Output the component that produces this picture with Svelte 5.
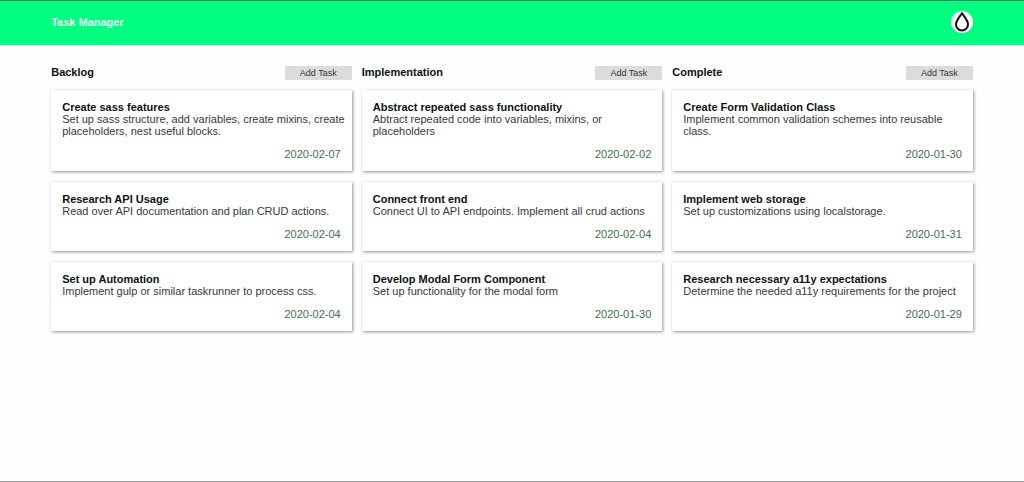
<script>
  const columns = [
    {
      name: 'Backlog',
      tasks: [
        { title: 'Create sass features', text: 'Set up sass structure, add variables, create mixins, create placeholders, nest useful blocks.', date: '2020-02-07' },
        { title: 'Research API Usage', text: 'Read over API documentation and plan CRUD actions.', date: '2020-02-04' },
        { title: 'Set up Automation', text: 'Implement gulp or similar taskrunner to process css.', date: '2020-02-04' }
      ]
    },
    {
      name: 'Implementation',
      tasks: [
        { title: 'Abstract repeated sass functionality', text: 'Abtract repeated code into variables, mixins, or placeholders', date: '2020-02-02' },
        { title: 'Connect front end', text: 'Connect UI to API endpoints. Implement all crud actions', date: '2020-02-04' },
        { title: 'Develop Modal Form Component', text: 'Set up functionality for the modal form', date: '2020-01-30' }
      ]
    },
    {
      name: 'Complete',
      tasks: [
        { title: 'Create Form Validation Class', text: 'Implement common validation schemes into reusable class.', date: '2020-01-30' },
        { title: 'Implement web storage', text: 'Set up customizations using localstorage.', date: '2020-01-31' },
        { title: 'Research necessary a11y expectations', text: 'Determine the needed a11y requirements for the project', date: '2020-01-29' }
      ]
    }
  ];
</script>

<div class="page">
  <header>
    <h1>Task Manager</h1>
    <button class="theme" aria-label="Change theme">
      <svg viewBox="0 0 22 22" aria-hidden="true">
        <path d="M11 2.1C9.4 5.1 5 9.3 5 13.4a6 6.1 0 0 0 12 0C17 9.3 12.6 5.1 11 2.1Z" fill="#fff" stroke="#111" stroke-width="2" stroke-linejoin="round" />
      </svg>
    </button>
  </header>

  <main>
    {#each columns as column}
      <section>
        <div class="head">
          <h2>{column.name}</h2>
          <button class="add">Add Task</button>
        </div>
        {#each column.tasks as task}
          <article>
            <h3>{task.title}</h3>
            <p>{task.text}</p>
            <time datetime={task.date}>{task.date}</time>
          </article>
        {/each}
      </section>
    {/each}
  </main>
</div>

<style>
  .page {
    box-sizing: border-box;
    min-height: 100vh;
    border-top: 1px solid #1a8a5a;
    border-bottom: 1px solid #9c9c9c;
    background: #fefefe;
    color: #0a140f;
    font: 11px/12px "Liberation Sans", Arial, sans-serif;
  }

  h1, h2, h3, p {
    margin: 0;
    font-size: inherit;
  }

  button {
    border: 0;
    font-family: inherit;
    cursor: pointer;
  }

  header {
    display: flex;
    align-items: center;
    justify-content: space-between;
    padding: 10px 5% 12px;
    background: #00ff80;
  }

  h1 {
    color: #e8fff2;
  }

  .theme {
    width: 22px;
    height: 22px;
    padding: 0;
    border-radius: 50%;
    background: #fff;
  }

  .theme svg {
    display: block;
    width: 100%;
  }

  main {
    display: grid;
    grid-template-columns: repeat(3, minmax(0, 1fr));
    gap: 10px;
    padding: 21px 5%;
  }

  .head {
    display: flex;
    align-items: flex-start;
    justify-content: space-between;
    margin-bottom: 10px;
  }

  .add {
    padding: 1px 15px;
    background: #dcdcdc;
    color: #333;
    font-size: 9px;
    line-height: 12px;
  }

  article {
    margin-bottom: 11px;
    padding: 11px 5px 11px 11px;
    background: #fff;
    box-shadow: 1px 1px 3px rgba(0, 0, 0, 0.42);
  }

  p {
    color: #333b37;
  }

  time {
    display: block;
    margin-top: 11px;
    padding-right: 6px;
    color: #3a7048;
    text-align: right;
  }
</style>
